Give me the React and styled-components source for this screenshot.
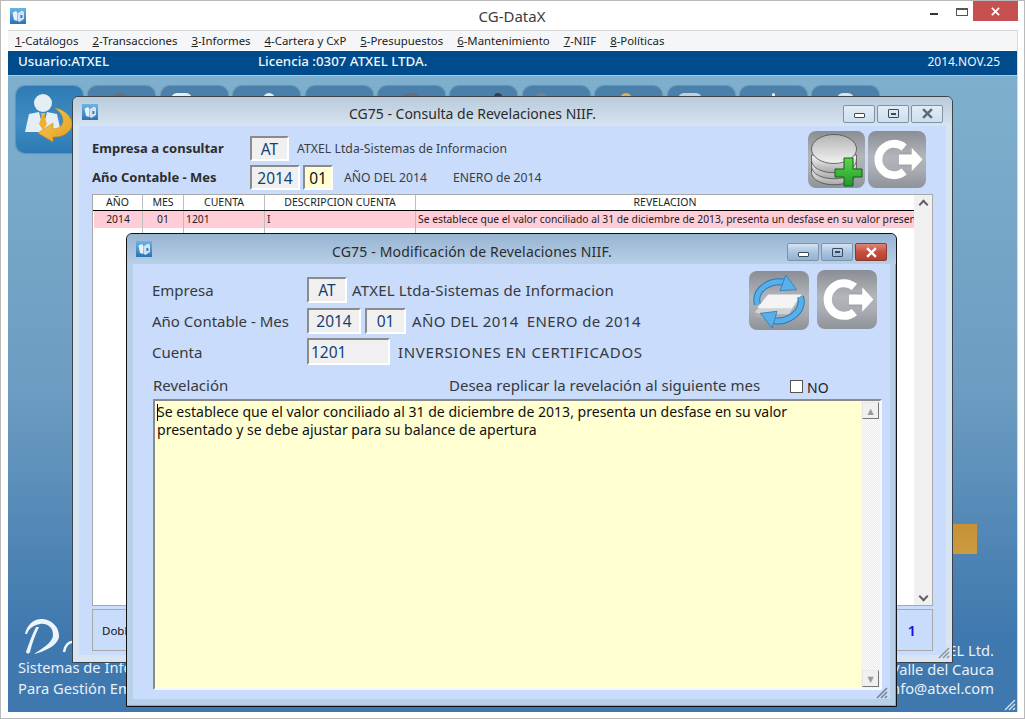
import React from 'react';
import styled, { createGlobalStyle } from 'styled-components';

const GlobalStyle = createGlobalStyle`
  html, body {
    margin: 0;
    padding: 0;
    background: #fff;
  }
  * {
    box-sizing: border-box;
  }
`;

const UI_FONT = `"Noto Sans", "DejaVu Sans", sans-serif`;

const Frame = styled.div`
  width: 1025px;
  height: 719px;
  display: flex;
  flex-direction: column;
  background: #fff;
  border: 1px solid #b9b9b9;
  font-family: ${UI_FONT};
  overflow: hidden;
`;

const MainTitle = styled.div`
  height: 29px;
  flex: none;
  display: flex;
  align-items: center;
  padding-left: 9px;
  color: #3c3c3c;
`;

const MainTitleText = styled.div`
  flex: 1;
  text-align: center;
  font-size: 15px;
  padding-left: 68px;
  margin-top: 1px;
`;

const MainControls = styled.div`
  align-self: flex-start;
  display: flex;
  align-items: flex-start;
  margin-right: 6px;
`;

const MinGlyph = styled.div`
  width: 8px;
  height: 2px;
  margin: 12px 18px 0 0;
  background: #333;
`;

const MaxGlyph = styled.div`
  width: 12px;
  height: 8px;
  margin: 7px 5px 0 0;
  border: 1px solid #555;
  border-top-width: 2px;
`;

const MainClose = styled.div`
  width: 45px;
  height: 20px;
  display: flex;
  align-items: center;
  justify-content: center;
  background: #c75050;
`;

const Body = styled.div`
  flex: 1;
  display: flex;
  flex-direction: column;
  margin: 0 6px 6px 7px;
  border: 1px solid #d8d8d8;
  border-width: 1px 1px 0 0;
  min-height: 0;
`;

const MenuBar = styled.div`
  height: 19px;
  flex: none;
  display: flex;
  align-items: center;
  padding-left: 7px;
  gap: 14px;
  background: #f5f6f7;
  font-size: 11.4px;
  color: #222;
`;

const MenuItem = styled.span`
  u {
    text-underline-offset: 1px;
  }
`;

const StatusBar = styled.div`
  height: 24px;
  flex: none;
  margin-top: 1px;
  display: flex;
  align-items: center;
  padding: 0 17px 4px 10px;
  background: #004b8b;
  color: #f0f5fa;
  font-size: 13.3px;
  font-weight: 500;
`;

const StatusUser = styled.span`
  width: 240px;
`;

const StatusDate = styled.span`
  margin-left: auto;
  font-weight: 400;
  font-size: 12px;
`;

const Desktop = styled.div`
  position: relative;
  flex: 1;
  display: flex;
  flex-direction: column;
  justify-content: space-between;
  border-top: 1px solid #a9cde0;
  background: linear-gradient(180deg, #7eb0ce 0%, #6c9cc1 50%, #3f78ae 88%, #3f78ae 100%);
  min-height: 0;
`;

const Toolbar = styled.div`
  display: flex;
  gap: 5.4px;
  padding: 10px 0 0 8px;
`;

const ToolButton = styled.div`
  position: relative;
  width: 67px;
  height: 67px;
  border-radius: 9px;
  overflow: hidden;
  background: ${(p) =>
    p.$active
      ? 'linear-gradient(180deg, #2f7ab4 0%, #3f8dc4 55%, #2e79b4 100%)'
      : '#4a80aa'};
  box-shadow: 0 0 1px 1px rgba(90, 135, 170, 0.7);
`;

const ToolGlyph = styled.div`
  margin-top: 7px;
  width: ${(p) => p.$w}px;
  margin-left: ${(p) => p.$x}px;
  height: 10px;
  border-radius: 6px 6px 0 0;
  background: ${(p) => p.$color};
`;

const DesktopFooter = styled.div`
  display: flex;
  justify-content: space-between;
  align-items: flex-end;
  padding: 0 23px 14px 10px;
  color: #e8f0f8;
  font-size: 14.7px;
  line-height: 19px;
`;

const Slogan = styled.div`
  display: flex;
  flex-direction: column;
  gap: 2px;
`;

const Contact = styled.div`
  text-align: right;
`;

const OrangeBlock = styled.div`
  position: absolute;
  left: 945px;
  top: 448px;
  width: 24px;
  height: 30px;
  background: linear-gradient(180deg, #c79236, #cc9a40);
`;

const Grip = styled.svg`
  position: absolute;
  right: ${(p) => p.$r}px;
  bottom: ${(p) => p.$b}px;
  width: 12px;
  height: 12px;
`;

const Win = styled.div`
  position: absolute;
  left: ${(p) => p.$left}px;
  top: ${(p) => p.$top}px;
  width: ${(p) => p.$width}px;
  height: ${(p) => p.$height}px;
  display: flex;
  flex-direction: column;
  padding: 0 6px 7px 6px;
  border: 1px solid ${(p) => (p.$active ? '#111' : '#3e4349')};
  border-radius: 6px 6px 0 0;
  background: ${(p) => (p.$active ? '#b8cfe8' : '#d7e4f1')};
  box-shadow: ${(p) => (p.$active ? 'inset -1px -1px 0 #45c4e0' : 'none')};
`;

const WinTitle = styled.div`
  height: ${(p) => p.$h}px;
  flex: none;
  margin: 0 -6px;
  padding: 0 9px;
  display: flex;
  align-items: center;
  border-radius: 6px 6px 0 0;
  color: #2b2b2b;
  font-size: 14px;
  background: ${(p) =>
    p.$active
      ? 'linear-gradient(180deg, #97b4d1 0%, #b8cfe8 100%)'
      : 'linear-gradient(180deg, #b9cada 0%, #d7e4f1 100%)'};
`;

const WinTitleText = styled.div`
  flex: 1;
  text-align: center;
  margin-top: 4px;
  padding-left: ${(p) => p.$padL || 0}px;
  letter-spacing: ${(p) => p.$ls || 0}px;
`;

const WinButtons = styled.div`
  display: flex;
  gap: 2px;
  margin-top: ${(p) => p.$mt}px;
`;

const WinButton = styled.div`
  width: 32px;
  height: 18px;
  display: flex;
  align-items: center;
  justify-content: center;
  border: 1px solid ${(p) => (p.$close ? '#8a3a30' : '#7d93aa')};
  border-radius: 2px;
  background: ${(p) =>
    p.$close
      ? 'linear-gradient(180deg, #dc8578 0%, #c8503e 50%, #b5402f 100%)'
      : p.$active
        ? 'linear-gradient(180deg, #d6e4f2 0%, #a9c5e0 50%, #90b2d3 100%)'
        : 'linear-gradient(180deg, #e2ecf6 0%, #cfdeee 100%)'};
`;

const BarGlyph = styled.div`
  width: 11px;
  height: 5px;
  margin-top: 4px;
  border: 1px solid #3c4a58;
  background: #fff;
  border-radius: 1px;
`;

const BoxGlyph = styled.div`
  width: 11px;
  height: 9px;
  border: 1px solid #3c4a58;
  display: flex;
  align-items: center;
  justify-content: center;
  border-radius: 1px;
  &::after {
    content: '';
    width: 5px;
    height: 2px;
    background: #3c4a58;
  }
`;

const WinBody = styled.div`
  flex: 1;
  position: relative;
  display: flex;
  flex-direction: column;
  min-height: 0;
  background: #c9dcfb;
`;

const TopArea = styled.div`
  display: flex;
  justify-content: space-between;
  align-items: flex-start;
  height: ${(p) => p.$h}px;
  padding: ${(p) => p.$pad};
  flex: none;
`;

const FormCol = styled.div`
  display: flex;
  flex-direction: column;
  gap: ${(p) => p.$gap}px;
  padding-top: ${(p) => p.$top}px;
`;

const FormRow = styled.div`
  display: flex;
  align-items: center;
  height: ${(p) => p.$h}px;
  padding-bottom: ${(p) => p.$pb || 0}px;
`;

const BoldLabel = styled.div`
  width: 158px;
  font-weight: 700;
  font-size: 13px;
  margin-top: -1px;
  color: #2d2d2d;
`;

const PlainLabel = styled.div`
  width: 155px;
  font-size: 15px;
  color: #37393e;
`;

const Field = styled.div`
  width: ${(p) => p.$w}px;
  height: ${(p) => p.$h}px;
  flex: none;
  margin-right: ${(p) => p.$mr || 0}px;
  display: flex;
  align-items: center;
  justify-content: ${(p) => (p.$left ? 'flex-start' : 'center')};
  padding-left: ${(p) => (p.$left ? 2 : 0)}px;
  border: 2px solid;
  border-color: #8b8b8b #fff #fff #8b8b8b;
  background: ${(p) => (p.$yellow ? '#ffffd6' : '#f0f0f0')};
  color: ${(p) => (p.$yellow ? '#111' : '#123f78')};
  font-size: 15.5px;
`;

const SmallInfo = styled.span`
  font-size: 12.2px;
  color: #3a3d44;
  letter-spacing: ${(p) => p.$ls || 0}px;
  width: ${(p) => (p.$w ? `${p.$w}px` : 'auto')};
`;

const Info = styled.span`
  flex: none;
  font-size: 15px;
  color: #37393e;
  margin-left: ${(p) => p.$ml || 0}px;
  letter-spacing: ${(p) => p.$ls || 0}px;
  width: ${(p) => (p.$w ? `${p.$w}px` : 'auto')};
`;

const ImageButtons = styled.div`
  display: flex;
  align-items: flex-start;
  gap: ${(p) => p.$gap}px;
`;

const ImageButton = styled.div`
  width: ${(p) => p.$w}px;
  height: ${(p) => p.$h}px;
  margin-top: ${(p) => p.$mt || 0}px;
  border-radius: 8px;
  overflow: hidden;
  background: linear-gradient(180deg, #8a8e94 0%, #b2b5ba 45%, #a8abb1 70%, #8e9299 100%);
  svg {
    display: block;
    width: 100%;
    height: 100%;
    filter: blur(0.4px);
  }
`;

const DataGrid = styled.div`
  flex: 1;
  margin: 0 13px;
  display: flex;
  border: 1px solid #a9a9a9;
  background: #fff;
  min-height: 0;
`;

const GridMain = styled.div`
  flex: 1;
  min-width: 0;
  display: flex;
  flex-direction: column;
`;

const GridRow = styled.div`
  display: grid;
  grid-template-columns: ${(p) => (p.$pink ? '49px' : '50px')} 41px 81px 151px 1fr;
  flex: ${(p) => (p.$fill ? 1 : 'none')};
  height: ${(p) => (p.$fill ? 'auto' : `${p.$h}px`)};
  border-bottom: ${(p) => (p.$head ? '1px solid #000' : 'none')};
  background: ${(p) => (p.$pink ? '#ffcdd7' : 'transparent')};
  margin-left: ${(p) => (p.$pink ? 1 : 0)}px;
  font-size: ${(p) => (p.$pink ? 10.3 : 10.5)}px;
  color: #222;
  overflow: hidden;
`;

const GridCell = styled.div`
  padding: 0 ${(p) => (p.$left ? 2 : 0)}px;
  text-align: ${(p) => (p.$left ? 'left' : 'center')};
  line-height: ${(p) => p.$lh || 15}px;
  white-space: nowrap;
  overflow: hidden;
  border-right: ${(p) => (p.$last ? 'none' : '1px solid #bdbdbd')};
`;

const VScroll = styled.div`
  width: ${(p) => p.$w}px;
  flex: none;
  display: flex;
  flex-direction: column;
  justify-content: space-between;
  align-items: center;
  background: ${(p) =>
    p.$dither
      ? 'repeating-conic-gradient(#e9e9e9 0% 25%, #fdfdfd 0% 50%) 0 0 / 2px 2px'
      : '#f0f0f0'};
`;

const Chevron = styled.div`
  width: 7px;
  height: 7px;
  margin: ${(p) => (p.$up ? '6px 0 0' : '0 0 5px')};
  border: solid #606060;
  border-width: 2px 0 0 2px;
  transform: rotate(${(p) => (p.$up ? 45 : 225)}deg);
`;

const ArrowButton = styled.div`
  width: 17px;
  height: 17px;
  margin: 1px;
  display: flex;
  align-items: center;
  justify-content: center;
  background: #f0f0f0;
  border: 1px solid;
  border-color: #e8e8e8 #777 #777 #e8e8e8;
  color: #999;
  font-size: 8px;
`;

const InfoPanel = styled.div`
  height: 42px;
  flex: none;
  margin: 3px 13px 4px;
  display: flex;
  align-items: center;
  justify-content: space-between;
  padding: 0 16px 0 9px;
  border: 1px solid #a9a9a9;
  color: #111;
  font-size: 11.5px;
`;

const PageNo = styled.span`
  font-size: 15px;
  font-weight: 600;
  color: #1414e6;
`;

const Checkbox = styled.div`
  width: 13px;
  height: 13px;
  margin-top: 2px;
  margin-right: 4px;
  background: #fff;
  border: 1px solid #555;
`;

const Memo = styled.div`
  flex: 1;
  display: flex;
  margin: 5px 8px 9px 20px;
  border: 2px solid;
  border-color: #8a8a8a #f4f8ff #f4f8ff #8a8a8a;
  min-height: 0;
`;

const MemoText = styled.div`
  flex: 1;
  padding: 2px 30px 0 2px;
  background: #ffffd2;
  color: #111;
  font-size: 14.05px;
  line-height: 18px;
`;

const Caret = styled.span`
  display: inline-block;
  width: 1px;
  height: 17px;
  margin-right: -1px;
  vertical-align: -4px;
  background: #000;
`;

const Mark = styled.span`
  margin-top: 4px;
  font-size: 14px;
  color: #222;
`;

const AppIcon = () => (
  <svg width="16" height="16" viewBox="0 0 16 16" style={{ flex: 'none' }}>
    <defs>
      <linearGradient id="appi" x1="0" y1="0" x2="0" y2="1">
        <stop offset="0" stopColor="#6db3e6" />
        <stop offset="1" stopColor="#2a74b5" />
      </linearGradient>
    </defs>
    <rect width="16" height="16" fill="url(#appi)" />
    <path d="M2.5 4.5 L6 3 L7.5 5 V13 L4 12 Z" fill="#e8f2fb" />
    <path d="M8 5 L12 2.5 L14 4 V11 L9.5 14 L8 13 Z" fill="#cfe3f5" />
    <rect x="10.4" y="7" width="2" height="3" fill="#3d7fb8" />
  </svg>
);

const CloseX = ({ color, size = 10, width = 2 }) => (
  <svg width={size} height={size} viewBox="0 0 10 10">
    <path d="M1 1 L9 9 M9 1 L1 9" stroke={color} strokeWidth={width} fill="none" />
  </svg>
);

const ExitIcon = () => (
  <svg viewBox="0 0 58 58">
    <path d="M36.3 16.7 A16 16 0 1 0 36.3 41.3" fill="none" stroke="#fff" strokeWidth="8" />
    <path d="M31 29 H44" stroke="#8f9298" strokeWidth="14" opacity="0.35" />
    <path d="M31 24 H44 V17 L55 29 L44 41 V34 H31 Z" fill="#fff" />
  </svg>
);

const DbAddIcon = () => (
  <svg viewBox="0 0 57 57">
    <defs>
      <linearGradient id="disk" x1="0" y1="0" x2="0" y2="1">
        <stop offset="0" stopColor="#b4b4b4" />
        <stop offset="1" stopColor="#f2f2f2" />
      </linearGradient>
      <linearGradient id="side" x1="0" y1="0" x2="0" y2="1">
        <stop offset="0" stopColor="#f7f7f7" />
        <stop offset="1" stopColor="#a8a8a8" />
      </linearGradient>
      <linearGradient id="plus" x1="0" y1="0" x2="0" y2="1">
        <stop offset="0" stopColor="#5fd64a" />
        <stop offset="1" stopColor="#1f9a2a" />
      </linearGradient>
    </defs>
    {[36, 30, 24].map((y) => (
      <path
        key={y}
        d={`M3.5 ${y} V${y + 5} C3.5 ${y + 22} 48.5 ${y + 22} 48.5 ${y + 5} V${y} Z`}
        fill="url(#side)"
        stroke="#4c4c4c"
        strokeWidth="0.8"
      />
    ))}
    <ellipse cx="26" cy="18" rx="22.5" ry="14.5" fill="url(#disk)" stroke="#4c4c4c" strokeWidth="0.8" />
    <path
      d="M36 27 H45 V38 H54 V46 H45 V55 H36 V46 H27 V38 H36 Z"
      fill="url(#plus)"
      stroke="#135f1b"
      strokeWidth="1"
    />
  </svg>
);

const RefreshIcon = () => (
  <svg viewBox="0 0 60 60">
    <path d="M4 46 L14 36 H44 L38 48 H12 Z" fill="#a9acb1" />
    <path d="M5 42 L15 32 H48 L40 44 H12 Z" fill="#d0d2d5" />
    <path d="M8 37 L19 24 H53 L43 38 H12 Z" fill="#f4f4f4" />
    <path d="M8 34 C4 18 22 8 38 12" fill="none" stroke="#2b78b8" strokeWidth="7" />
    <path d="M8 34 C4 18 22 8 38 12" fill="none" stroke="#58b0ea" strokeWidth="5" />
    <path d="M37 4 L48 19 L31 20 Z" fill="#58b0ea" stroke="#2b78b8" strokeWidth="0.8" />
    <path d="M52 26 C56 42 38 54 22 50" fill="none" stroke="#2b78b8" strokeWidth="7" />
    <path d="M52 26 C56 42 38 54 22 50" fill="none" stroke="#58b0ea" strokeWidth="5" />
    <path d="M23 58 L11 43 L28 41 Z" fill="#58b0ea" stroke="#2b78b8" strokeWidth="0.8" />
  </svg>
);

const UserIcon = () => (
  <svg width="67" height="67" viewBox="0 0 67 67">
    <defs>
      <linearGradient id="back" x1="0" y1="0" x2="1" y2="1">
        <stop offset="0" stopColor="#f7cf58" />
        <stop offset="1" stopColor="#e49a1f" />
      </linearGradient>
    </defs>
    <circle cx="27" cy="17" r="9" fill="#e6eef5" />
    <path d="M13 28 L23 26 L27 42 L31 26 L41 28 L45 46 H9 Z" fill="#e6eef5" />
    <path d="M24.5 27 H29.5 L28.5 31 L31 38 L27 44 L23 38 L25.5 31 Z" fill="#eeb02e" />
    <path
      d="M39 22 C52 24 62 38 52 46 C48 50 43 51 37 51 L37 56 L22 47 L37 37 L37 43 C44 43 48 38 47 33 C46 28 43 25 39 22 Z"
      fill="url(#back)"
      stroke="#c98a1a"
      strokeWidth="0.6"
    />
  </svg>
);

const DsLogo = () => (
  <svg width="50" height="38" viewBox="0 0 50 38" style={{ marginLeft: 5 }}>
    <path
      d="M2 16 C4 6 12 0 20 1 C30 2 36 10 36 18 C36 26 24 33 11 36 C20 30 30 24 30 17 C30 9 24 5 17 6 C11 7 6 10 4 16 Z"
      fill="#eef4fa"
    />
    <path d="M13 9 C9 17 6 25 3 34 C4 36 6 36 7 34 C9 26 12 17 16 9 Z" fill="#eef4fa" />
    <path d="M41 34 C42 27 46 24 49 24" stroke="#eef4fa" strokeWidth="2.5" fill="none" />
  </svg>
);

const GripIcon = ({ color }) => (
  <path
    d="M11 1 L1 11 M11 5 L5 11 M11 9 L9 11"
    stroke={color}
    strokeWidth="1.4"
    fill="none"
  />
);

const MENU = [
  ['1', '-Catálogos'],
  ['2', '-Transacciones'],
  ['3', '-Informes'],
  ['4', '-Cartera y CxP'],
  ['5', '-Presupuestos'],
  ['6', '-Mantenimiento'],
  ['7', '-NIIF'],
  ['8', '-Políticas'],
];

// only the tops of these icons show above the open window
const TOOLS = [
  { w: 15, x: 24, color: '#66707a' },
  { w: 21, x: 10, color: '#e8eef3' },
  { w: 12, x: 30, color: '#e6edf3' },
  { w: 0, x: 0, color: 'transparent' },
  { w: 18, x: 24, color: '#66707a' },
  { w: 8, x: 44, color: '#33404c' },
  { w: 13, x: 12, color: '#6d8590' },
  { w: 12, x: 25, color: '#e0b050' },
  { w: 24, x: 10, color: '#c0d0dc' },
  { w: 3, x: 32, color: '#e6edf3' },
  { w: 17, x: 25, color: '#d8e3ec' },
];

const TitleButtons = ({ active, mt }) => (
  <WinButtons $mt={mt}>
    <WinButton $active={active}>
      <BarGlyph />
    </WinButton>
    <WinButton $active={active}>
      <BoxGlyph />
    </WinButton>
    <WinButton $active={active} $close={active}>
      <CloseX color={active ? '#fff' : '#5b6a79'} size={11} width={2.2} />
    </WinButton>
  </WinButtons>
);

const ConsultaWindow = () => (
  <Win $left={64} $top={20} $width={881} $height={567}>
    <WinTitle $h={29}>
      <AppIcon />
      <WinTitleText $padL={4}>CG75 - Consulta de Revelaciones NIIF.</WinTitleText>
      <TitleButtons mt={4} />
    </WinTitle>
    <WinBody>
      <TopArea $h={68} $pad="5px 20px 0 13px">
        <FormCol $gap={4} $top={5}>
          <FormRow $h={25}>
            <BoldLabel>Empresa a consultar</BoldLabel>
            <Field $w={39} $h={25} $mr={8}>AT</Field>
            <SmallInfo $ls={0.05}>ATXEL Ltda-Sistemas de Informacion</SmallInfo>
          </FormRow>
          <FormRow $h={25}>
            <BoldLabel>Año Contable - Mes</BoldLabel>
            <Field $w={50} $h={25} $mr={3}>2014</Field>
            <Field $w={30} $h={25} $mr={11} $yellow>01</Field>
            <SmallInfo $w={109}>AÑO DEL 2014</SmallInfo>
            <SmallInfo>ENERO de 2014</SmallInfo>
          </FormRow>
        </FormCol>
        <ImageButtons $gap={3}>
          <ImageButton $w={57} $h={57}><DbAddIcon /></ImageButton>
          <ImageButton $w={58} $h={57}><ExitIcon /></ImageButton>
        </ImageButtons>
      </TopArea>
      <DataGrid>
        <GridMain>
          <GridRow $h={16} $head>
            <GridCell>AÑO</GridCell>
            <GridCell>MES</GridCell>
            <GridCell>CUENTA</GridCell>
            <GridCell>DESCRIPCION CUENTA</GridCell>
            <GridCell $last>REVELACION</GridCell>
          </GridRow>
          <GridRow $h={17} $pink>
            <GridCell $lh={16}>2014</GridCell>
            <GridCell $lh={16}>01</GridCell>
            <GridCell $lh={16} $left>1201</GridCell>
            <GridCell $lh={16} $left>I</GridCell>
            <GridCell $lh={16} $left $last>
              Se establece que el valor conciliado al 31 de diciembre de 2013, presenta un desfase en su valor presentado
            </GridCell>
          </GridRow>
          <GridRow $fill>
            <GridCell />
            <GridCell />
            <GridCell />
            <GridCell />
            <GridCell $last />
          </GridRow>
        </GridMain>
        <VScroll $w={18}>
          <Chevron $up />
          <Chevron />
        </VScroll>
      </DataGrid>
      <InfoPanel>
        <span>Doble</span>
        <PageNo>1</PageNo>
      </InfoPanel>
      <Grip $r={-4} $b={-4} viewBox="0 0 12 12"><GripIcon color="#8a8f96" /></Grip>
    </WinBody>
  </Win>
);

const ModificacionWindow = () => (
  <Win $active $left={118} $top={157} $width={771} $height={474}>
    <WinTitle $active $h={30}>
      <AppIcon />
      <WinTitleText $padL={5} $ls={0.17}>CG75 - Modificación de Revelaciones NIIF.</WinTitleText>
      <TitleButtons active mt={6} />
    </WinTitle>
    <WinBody>
      <TopArea $h={112} $pad="6px 13px 0 19px">
        <FormCol $gap={4} $top={7}>
          <FormRow $h={27} $pb={1}>
            <PlainLabel>Empresa</PlainLabel>
            <Field $w={40} $h={26}>AT</Field>
            <Info $ml={5} $ls={0.16}>ATXEL Ltda-Sistemas de Informacion</Info>
          </FormRow>
          <FormRow $h={26}>
            <PlainLabel>Año Contable - Mes</PlainLabel>
            <Field $w={54} $h={26} $mr={4}>2014</Field>
            <Field $w={41} $h={26}>01</Field>
            <Info $ml={6} $ls={0.4}>AÑO DEL 2014</Info>
            <Info $ml={8} $ls={0.4}>ENERO de 2014</Info>
          </FormRow>
          <FormRow $h={27}>
            <PlainLabel>Cuenta</PlainLabel>
            <Field $w={83} $h={27} $left>1201</Field>
            <Info $ml={8} $ls={0.65}>INVERSIONES EN CERTIFICADOS</Info>
          </FormRow>
        </FormCol>
        <ImageButtons $gap={8}>
          <ImageButton $w={60} $h={59} $mt={1}><RefreshIcon /></ImageButton>
          <ImageButton $w={60} $h={59}><ExitIcon /></ImageButton>
        </ImageButtons>
      </TopArea>
      <FormRow $h={18}>
        <Info $ml={20} $w={296}>Revelación</Info>
        <Info $w={341}>Desea replicar la revelación al siguiente mes</Info>
        <Checkbox />
        <Mark>NO</Mark>
      </FormRow>
      <Memo>
        <MemoText>
          <Caret />
          Se establece que el valor conciliado al 31 de diciembre de 2013, presenta un desfase en su valor presentado y se debe ajustar para su balance de apertura
        </MemoText>
        <VScroll $w={19} $dither>
          <ArrowButton>▲</ArrowButton>
          <ArrowButton>▼</ArrowButton>
        </VScroll>
      </Memo>
      <Grip $r={2} $b={0} viewBox="0 0 12 12"><GripIcon color="#6f7a86" /></Grip>
    </WinBody>
  </Win>
);

export default function App() {
  return (
    <>
      <GlobalStyle />
      <Frame>
        <MainTitle>
          <AppIcon />
          <MainTitleText>CG-DataX</MainTitleText>
          <MainControls>
            <MinGlyph />
            <MaxGlyph />
            <MainClose><CloseX color="#fff" size={9} /></MainClose>
          </MainControls>
        </MainTitle>
        <Body>
          <MenuBar>
            {MENU.map(([key, rest]) => (
              <MenuItem key={key}><u>{key}</u>{rest}</MenuItem>
            ))}
          </MenuBar>
          <StatusBar>
            <StatusUser>Usuario:ATXEL</StatusUser>
            <span>Licencia :0307 ATXEL LTDA.</span>
            <StatusDate>2014.NOV.25</StatusDate>
          </StatusBar>
          <Desktop>
            <Toolbar>
              <ToolButton $active><UserIcon /></ToolButton>
              {TOOLS.map((t, i) => (
                <ToolButton key={i}>
                  <ToolGlyph $w={t.w} $x={t.x} $color={t.color} />
                </ToolButton>
              ))}
            </Toolbar>
            <OrangeBlock />
            <DesktopFooter>
              <Slogan>
                <DsLogo />
                <span>Sistemas de Informacion</span>
                <span>Para Gestión Empresarial</span>
              </Slogan>
              <Contact>
                <div>ATXEL Ltd.</div>
                <div>Cali - Valle del Cauca</div>
                <div>info@atxel.com</div>
              </Contact>
            </DesktopFooter>
            <ConsultaWindow />
            <ModificacionWindow />
            <Grip $r={1} $b={1} viewBox="0 0 12 12"><GripIcon color="#d5e2ee" /></Grip>
          </Desktop>
        </Body>
      </Frame>
    </>
  );
}
